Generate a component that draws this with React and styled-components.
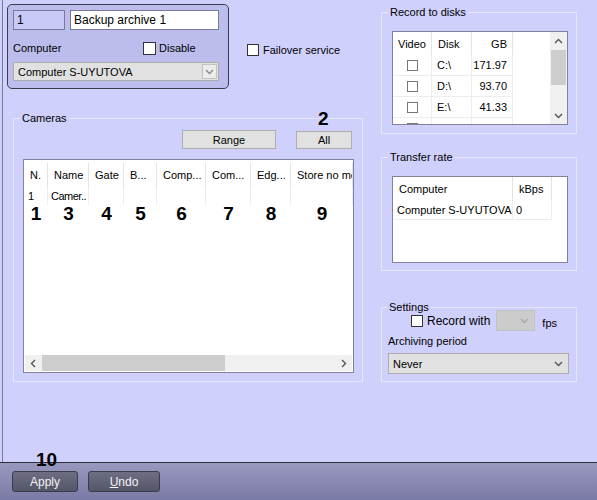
import React from 'react';
import styled, { createGlobalStyle } from 'styled-components';

const GlobalStyle = createGlobalStyle`
  html, body {
    margin: 0;
    padding: 0;
  }
  body {
    font-family: "Liberation Sans", Arial, sans-serif;
    font-size: 11px;
    color: #000;
  }
  * {
    box-sizing: border-box;
  }
`;

const Page = styled.div`
  width: 597px;
  height: 500px;
  background: #d0d0fc;
  display: flex;
  flex-direction: column;
  overflow: hidden;
`;

const Main = styled.div`
  height: 462px;
  margin-left: 2px;
  border-left: 1px solid #7c7c92;
  display: flex;
`;

const LeftCol = styled.div`
  width: 372px;
  display: flex;
  flex-direction: column;
  padding-top: 4px;
`;

const RightCol = styled.div`
  flex: 1;
  display: flex;
  flex-direction: column;
  padding-left: 6px;
`;

const TopRow = styled.div`
  display: flex;
  align-items: flex-start;
  padding-left: 4px;
`;

const TopPanel = styled.div`
  width: 222px;
  height: 85px;
  border: 1px solid #3c3c4c;
  border-radius: 5px;
  background: #bdbded;
  padding: 5px 9px 0 5px;
  display: flex;
  flex-direction: column;
`;

const FieldRow = styled.div`
  display: flex;
  gap: 5px;
`;

const TextBox = styled.div`
  width: ${p => p.$w}px;
  height: 20px;
  border: 1px solid #7a7a98;
  background: ${p => (p.$tint ? '#c9c9f7' : '#fff')};
  display: flex;
  align-items: center;
  padding-left: 3px;
  font-size: 12px;
  white-space: nowrap;
`;

const LabelRow = styled.div`
  display: grid;
  grid-template-columns: 130px auto;
  align-items: center;
  height: 24px;
  margin-top: 6px;
`;

const CheckLabel = styled.label`
  display: flex;
  align-items: center;
  gap: ${p => p.$gap || 3}px;
  font-size: ${p => p.$fs || 11}px;
  white-space: nowrap;
`;

const Check = styled.span`
  display: inline-block;
  width: ${p => p.$size || 13}px;
  height: ${p => p.$size || 13}px;
  background: #fff;
  border: 1px solid ${p => (p.$soft ? '#777' : '#333')};
`;

const Select = styled.div`
  width: ${p => p.$w}px;
  height: ${p => p.$h}px;
  margin-top: ${p => p.$mt || 0}px;
  margin-left: ${p => p.$ml || 0}px;
  background: ${p => (p.$disabled ? '#cccccc' : '#e1e1e1')};
  border: 1px solid ${p => (p.$disabled ? '#c2c2c2' : '#acacac')};
  display: flex;
  align-items: center;
  padding-left: 4px;
  font-size: 11px;
  white-space: nowrap;
`;

const ArrowBox = styled.span`
  margin-left: auto;
  margin-right: 1px;
  width: 15px;
  height: 15px;
  border: 1px solid #c2c2c2;
  background: #ececec;
  display: flex;
  align-items: center;
  justify-content: center;
`;

const ChevronSlot = styled.span`
  margin-left: auto;
  margin-right: 5px;
  display: flex;
`;

const Failover = styled.div`
  margin: 40px 0 0 18px;
`;

const Group = styled.fieldset`
  margin: ${p => p.$mt}px 0 0 ${p => p.$ml || 0}px;
  padding: 0 ${p => p.$pr}px ${p => p.$pb}px ${p => p.$pl}px;
  width: ${p => p.$w}px;
  min-width: 0;
  border: 1px solid #e6e6fb;
  display: flex;
  flex-direction: column;
`;

const Legend = styled.legend`
  padding: 0 2px;
  margin-left: ${p => p.$ml}px;
  line-height: 13px;
  font-size: 11px;
`;

const ButtonRow = styled.div`
  display: flex;
  justify-content: flex-end;
  align-items: flex-end;
  gap: 20px;
  margin-top: 5px;
  padding-right: 2px;
`;

const FormButton = styled.button`
  width: ${p => p.$w}px;
  height: ${p => p.$h}px;
  padding: 0;
  background: #e1e1e1;
  border: 1px solid #adadad;
  font: 11px "Liberation Sans", Arial, sans-serif;
  color: #000;
`;

const MarkAnchor = styled.div`
  position: relative;
  display: flex;
`;

const Mark = styled.span`
  position: absolute;
  left: ${p => p.$x}px;
  top: ${p => p.$y}px;
  font: bold 19px/1 "Liberation Sans", Arial, sans-serif;
  color: #000;
`;

const ListBox = styled.div`
  width: ${p => p.$w}px;
  height: ${p => p.$h}px;
  margin-top: ${p => p.$mt || 0}px;
  border: 1px solid #82829a;
  background: #fff;
  display: flex;
  flex-direction: ${p => (p.$row ? 'row' : 'column')};
  overflow: hidden;
`;

const Grid = styled.div`
  display: grid;
  grid-template-columns: ${p => p.$cols};
  margin-top: ${p => p.$mt || 0}px;
`;

const HeadCell = styled.div`
  height: ${p => p.$h}px;
  display: flex;
  align-items: center;
  justify-content: ${p => (p.$right ? 'flex-end' : 'flex-start')};
  padding: 0 ${p => (p.$right ? 5 : 0)}px 0 ${p => (p.$right ? 0 : p.$pl ?? 6)}px;
  border-right: 1px solid #e3e3e3;
  white-space: nowrap;
  overflow: hidden;
`;

const Cell = styled.div`
  height: ${p => p.$h}px;
  display: flex;
  align-items: center;
  justify-content: ${p => (p.$align === 'right' ? 'flex-end' : p.$align === 'center' ? 'center' : 'flex-start')};
  padding: 0 ${p => (p.$align === 'right' ? 5 : 0)}px 0 ${p => (p.$align ? 0 : p.$pl ?? 4)}px;
  border-right: 1px solid #ededed;
  border-bottom: ${p => (p.$lined ? '1px solid #ededed' : 'none')};
  letter-spacing: ${p => (p.$tight ? '-0.5px' : 'normal')};
  white-space: nowrap;
  overflow: hidden;
`;

const MarkCell = styled.div`
  height: 18px;
  text-align: center;
  font: bold 19px/18px "Liberation Sans", Arial, sans-serif;
`;

const Spacer = styled.div`
  flex: 1;
`;

const HScroll = styled.div`
  height: 16px;
  margin: 0 1px 1px;
  background: #f0f0f0;
  display: flex;
  align-items: stretch;
`;

const ScrollBtn = styled.div`
  width: 17px;
  height: ${p => p.$h || 'auto'};
  display: flex;
  align-items: center;
  justify-content: center;
  flex-shrink: 0;
`;

const HThumb = styled.div`
  width: 183px;
  background: #cdcdcd;
`;

const VScroll = styled.div`
  width: 17px;
  background: #f0f0f0;
  display: flex;
  flex-direction: column;
  flex-shrink: 0;
`;

const VThumb = styled.div`
  height: 35px;
  margin: 0 1px;
  background: #cdcdcd;
`;

const TableArea = styled.div`
  flex: 1;
  overflow: hidden;
`;

const SettingRow = styled.div`
  display: flex;
  align-items: center;
  margin: -4px 0 0 23px;
`;

const Fps = styled.span`
  margin: 4px 0 0 7px;
  font-size: 11px;
`;

const FieldLabel = styled.div`
  margin-top: ${p => p.$mt || 0}px;
  line-height: 13px;
  font-size: 11px;
`;

const BottomBar = styled.div`
  position: relative;
  flex: 1;
  border-top: 1px solid #2e2e3c;
  background: linear-gradient(#9898bf, #7a7aa6);
  display: flex;
  gap: 10px;
  padding: 8px 0 0 12px;
`;

const BarButton = styled.button`
  width: ${p => p.$w}px;
  height: 21px;
  padding: 0;
  border: 1px solid #3b3b4c;
  border-radius: 3px;
  background: linear-gradient(#6e6e82, #56566a);
  color: #f2f2f2;
  font: 12px "Liberation Sans", Arial, sans-serif;

  u {
    text-decoration: underline;
  }
`;

const Chevron = ({ dir = 'down', color = '#606060' }) => {
  const paths = {
    down: 'M1 3 L4.5 6.5 L8 3',
    up: 'M1 6 L4.5 2.5 L8 6',
    left: 'M6 1 L2.5 4.5 L6 8',
    right: 'M3 1 L6.5 4.5 L3 8',
  };
  return (
    <svg width="9" height="9" viewBox="0 0 9 9">
      <path d={paths[dir]} fill="none" stroke={color} strokeWidth="1.4" />
    </svg>
  );
};

const camCols = [
  { title: 'N.', w: 24 },
  { title: 'Name', w: 41 },
  { title: 'Gate', w: 35 },
  { title: 'B...', w: 33 },
  { title: 'Comp...', w: 49 },
  { title: 'Com...', w: 45 },
  { title: 'Edg...', w: 40 },
  { title: 'Store no mode', w: 62 },
];
const camRow = ['1', 'Camer..', '', '', '', '', '', ''];
const camMarks = ['1', '3', '4', '5', '6', '7', '8', '9'];

const disks = [
  { disk: 'C:\\', gb: '171.97' },
  { disk: 'D:\\', gb: '93.70' },
  { disk: 'E:\\', gb: '41.33' },
  { disk: 'F:\\', gb: '451.63' },
];

export default function App() {
  return (
    <Page>
      <GlobalStyle />
      <Main>
        <LeftCol>
          <TopRow>
            <TopPanel>
              <FieldRow>
                <TextBox $w={52} $tint>1</TextBox>
                <TextBox $w={149}>Backup archive 1</TextBox>
              </FieldRow>
              <LabelRow>
                <span>Computer</span>
                <CheckLabel>
                  <Check />
                  Disable
                </CheckLabel>
              </LabelRow>
              <Select $w={206} $h={19} $mt={2}>
                Computer S-UYUTOVA
                <ArrowBox>
                  <Chevron color="#8a8a8a" />
                </ArrowBox>
              </Select>
            </TopPanel>
            <Failover>
              <CheckLabel $gap={4}>
                <Check $size={12} />
                Failover service
              </CheckLabel>
            </Failover>
          </TopRow>

          <Group $mt={23} $ml={10} $w={350} $pl={9} $pr={8} $pb={8}>
            <Legend $ml={-3}>Cameras</Legend>
            <ButtonRow>
              <FormButton $w={94} $h={19}>Range</FormButton>
              <MarkAnchor>
                <FormButton $w={56} $h={18}>All</FormButton>
                <Mark $x={22} $y={-22}>2</Mark>
              </MarkAnchor>
            </ButtonRow>
            <ListBox $w={331} $h={214} $mt={10}>
              <Grid $cols={camCols.map(c => `${c.w}px`).join(' ')} $mt={3}>
                {camCols.map(c => (
                  <HeadCell key={c.title} $h={24}>{c.title}</HeadCell>
                ))}
                {camRow.map((v, i) => (
                  <Cell key={i} $h={18} $pl={i === 1 ? 3 : 4} $tight={i === 1}>{v}</Cell>
                ))}
                {camMarks.map(m => (
                  <MarkCell key={m}>{m}</MarkCell>
                ))}
              </Grid>
              <Spacer />
              <HScroll>
                <ScrollBtn><Chevron dir="left" color="#555" /></ScrollBtn>
                <HThumb />
                <Spacer />
                <ScrollBtn><Chevron dir="right" color="#555" /></ScrollBtn>
              </HScroll>
            </ListBox>
          </Group>
        </LeftCol>

        <RightCol>
          <Group $mt={6} $w={196} $pl={10} $pr={8} $pb={8}>
            <Legend $ml={-4}>Record to disks</Legend>
            <ListBox $w={176} $h={94} $mt={12} $row>
              <TableArea>
                <Grid $cols="39px 40px 41px">
                  <HeadCell $h={23} $pl={5}>Video</HeadCell>
                  <HeadCell $h={23}>Disk</HeadCell>
                  <HeadCell $h={23} $right>GB</HeadCell>
                  {disks.map(d => (
                    <React.Fragment key={d.disk}>
                      <Cell $h={21} $align="center" $lined>
                        <Check $size={11} $soft />
                      </Cell>
                      <Cell $h={21} $pl={5} $lined>{d.disk}</Cell>
                      <Cell $h={21} $align="right" $lined>{d.gb}</Cell>
                    </React.Fragment>
                  ))}
                </Grid>
              </TableArea>
              <VScroll>
                <ScrollBtn $h="18px"><Chevron dir="up" color="#555" /></ScrollBtn>
                <VThumb />
                <Spacer />
                <ScrollBtn $h="18px"><Chevron dir="down" color="#555" /></ScrollBtn>
              </VScroll>
            </ListBox>
          </Group>

          <Group $mt={17} $w={196} $pl={10} $pr={8} $pb={7}>
            <Legend $ml={-4}>Transfer rate</Legend>
            <ListBox $w={176} $h={87} $mt={12}>
              <Grid $cols="120px 39px">
                <HeadCell $h={24}>Computer</HeadCell>
                <HeadCell $h={24}>kBps</HeadCell>
                <Cell $h={19} $lined>Computer S-UYUTOVA</Cell>
                <Cell $h={19} $pl={3} $lined>0</Cell>
              </Grid>
            </ListBox>
          </Group>

          <Group $mt={30} $w={196} $pl={6} $pr={7} $pb={7}>
            <Legend $ml={-1}>Settings</Legend>
            <SettingRow>
              <CheckLabel $gap={4} $fs={12}>
                <Check $size={12} />
                Record with
              </CheckLabel>
              <Select $w={39} $h={21} $ml={6} $disabled>
                <ChevronSlot>
                  <Chevron color="#a8a8a8" />
                </ChevronSlot>
              </Select>
              <Fps>fps</Fps>
            </SettingRow>
            <FieldLabel $mt={4}>Archiving period</FieldLabel>
            <Select $w={181} $h={21} $mt={5}>
              Never
              <ChevronSlot>
                <Chevron color="#555" />
              </ChevronSlot>
            </Select>
          </Group>
        </RightCol>
      </Main>

      <BottomBar>
        <Mark $x={36} $y={-13}>10</Mark>
        <BarButton $w={66}>Apply</BarButton>
        <BarButton $w={72}><u>U</u>ndo</BarButton>
      </BottomBar>
    </Page>
  );
}
